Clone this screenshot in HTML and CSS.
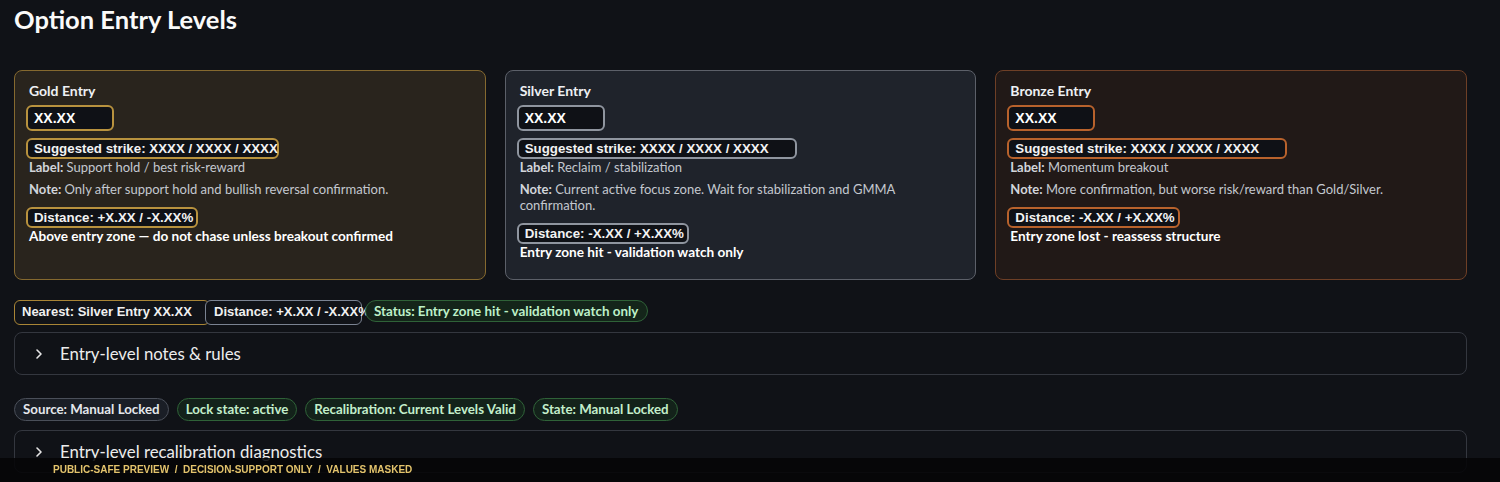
FILE: index.html
```html
<!DOCTYPE html>
<html lang="en">
<head>
<meta charset="utf-8">
<title>Option Entry Levels</title>
<link rel="stylesheet" href="styles.css">
</head>
<body>
<main class="page">
  <h1 class="title">Option Entry Levels</h1>

  <section class="cards">
    <article class="card card--gold">
      <h3 class="card-title">Gold Entry</h3>
      <div class="value-box">XX.XX</div>
      <div class="pill pill--strike pill--tight">Suggested strike: XXXX / XXXX / XXXX</div>
      <p class="meta"><b>Label:</b> Support hold / best risk-reward</p>
      <p class="meta note"><b>Note:</b> Only after support hold and bullish reversal confirmation.</p>
      <div class="pill pill--dist">Distance: +X.XX / -X.XX%</div>
      <p class="verdict">Above entry zone — do not chase unless breakout confirmed</p>
    </article>

    <article class="card card--silver">
      <h3 class="card-title">Silver Entry</h3>
      <div class="value-box">XX.XX</div>
      <div class="pill pill--strike">Suggested strike: XXXX / XXXX / XXXX</div>
      <p class="meta"><b>Label:</b> Reclaim / stabilization</p>
      <p class="meta note"><b>Note:</b> Current active focus zone. Wait for stabilization and GMMA confirmation.</p>
      <div class="pill pill--dist">Distance: -X.XX / +X.XX%</div>
      <p class="verdict">Entry zone hit - validation watch only</p>
    </article>

    <article class="card card--bronze">
      <h3 class="card-title">Bronze Entry</h3>
      <div class="value-box">XX.XX</div>
      <div class="pill pill--strike">Suggested strike: XXXX / XXXX / XXXX</div>
      <p class="meta"><b>Label:</b> Momentum breakout</p>
      <p class="meta note"><b>Note:</b> More confirmation, but worse risk/reward than Gold/Silver.</p>
      <div class="pill pill--dist">Distance: -X.XX / +X.XX%</div>
      <p class="verdict">Entry zone lost - reassess structure</p>
    </article>
  </section>

  <div class="summary">
    <span class="tag tag--nearest">Nearest: Silver Entry XX.XX</span>
    <span class="tag tag--distance">Distance: +X.XX / -X.XX%</span>
    <span class="status">Status: Entry zone hit - validation watch only</span>
  </div>

  <div class="expander">
    <svg class="chev" width="8" height="12" viewBox="0 0 8 12" aria-hidden="true"><path d="M2 2l4 4-4 4" fill="none" stroke="#e6e6e6" stroke-width="1.6" stroke-linecap="round" stroke-linejoin="round"/></svg>
    <span class="expander-label">Entry-level notes &amp; rules</span>
  </div>

  <div class="chips">
    <span class="chip chip--neutral">Source: Manual Locked</span>
    <span class="chip chip--ok">Lock state: active</span>
    <span class="chip chip--ok">Recalibration: Current Levels Valid</span>
    <span class="chip chip--ok">State: Manual Locked</span>
  </div>

  <div class="expander expander--second">
    <svg class="chev" width="8" height="12" viewBox="0 0 8 12" aria-hidden="true"><path d="M2 2l4 4-4 4" fill="none" stroke="#e6e6e6" stroke-width="1.6" stroke-linecap="round" stroke-linejoin="round"/></svg>
    <span class="expander-label">Entry-level recalibration diagnostics</span>
  </div>
</main>

<footer class="preview-bar">PUBLIC-SAFE PREVIEW &nbsp;/&nbsp; DECISION-SUPPORT ONLY &nbsp;/&nbsp; VALUES MASKED</footer>
</body>
</html>
```

FILE: styles.css
```css
html, body {
  margin: 0;
  padding: 0;
  background: #101217;
}

body {
  font-family: Lato, "Noto Sans", sans-serif;
  color: #fafafa;
}

.page {
  padding: 4px 33px 40px 14px;
}

.title {
  margin: 0 0 35px;
  font-size: 25.5px;
  line-height: 31px;
  font-weight: 700;
  color: #fafafa;
}

.cards {
  display: grid;
  grid-template-columns: repeat(3, 1fr);
  gap: 19px;
}

.card {
  border: 1px solid;
  border-radius: 8px;
  padding: 10px 14px 19px;
}

.card--gold {
  background: #29241d;
  border-color: #85692f;
}

.card--silver {
  background: #1f232b;
  border-color: #5c6069;
}

.card--bronze {
  background: #211917;
  border-color: #6e3f26;
}

.card-title {
  margin: 0 0 4px;
  font-size: 14px;
  line-height: 20px;
  font-weight: 700;
  color: #eef0f3;
}

.value-box {
  width: 88px;
  height: 26px;
  box-sizing: border-box;
  margin: 0 0 7px -3px;
  padding-left: 6px;
  border: 2px solid;
  border-radius: 6px;
  background: #0f1116;
  font: 700 14px/22px "Liberation Sans", Arial, sans-serif;
  color: #ffffff;
}

.pill {
  width: fit-content;
  height: 21px;
  box-sizing: border-box;
  margin-left: -3px;
  padding: 0 3px 0 6px;
  border: 2px solid;
  border-radius: 6px;
  background: #0f1116;
  font: 700 13.3px/17px "Liberation Sans", Arial, sans-serif;
  color: #f2f2f2;
  white-space: nowrap;
}

.pill--strike {
  width: 280px;
}

.pill--tight {
  width: 253px;
}

.pill--dist {
  margin-top: 10px;
}

.card--gold .value-box,
.card--gold .pill {
  border-color: #b8923e;
}

.card--silver .value-box,
.card--silver .pill {
  border-color: #8f959f;
}

.card--bronze .value-box,
.card--bronze .pill {
  border-color: #b8622c;
}

.meta {
  margin: 0;
  font-size: 13px;
  line-height: 16px;
  color: #c4c8cf;
}

.meta b {
  font-weight: 700;
  color: #d2d5db;
}

.note {
  margin-top: 6px;
}

.verdict {
  margin: 0;
  font-size: 13.6px;
  line-height: 16px;
  font-weight: 700;
  color: #ffffff;
}

.summary {
  display: flex;
  align-items: flex-start;
  margin-top: 20px;
}

.tag {
  height: 25px;
  box-sizing: border-box;
  border: 1.5px solid;
  border-radius: 6px;
  background: #111318;
  font: 700 13px/22px "Liberation Sans", Arial, sans-serif;
  color: #f0f0f0;
  white-space: nowrap;
}

.tag--nearest {
  width: 196px;
  padding-left: 7px;
  border-color: #a98536;
}

.tag--distance {
  width: 157px;
  margin-left: -5px;
  padding-left: 8px;
  border-color: #7b8392;
}

.status {
  height: 22px;
  box-sizing: border-box;
  margin-left: 3px;
  padding: 0 9px 0 8px;
  border: 1px solid #2f6238;
  border-radius: 11px;
  background: #14251a;
  font-size: 13.4px;
  line-height: 20px;
  font-weight: 700;
  color: #bdf0c8;
  white-space: nowrap;
}

.expander {
  display: flex;
  align-items: center;
  height: 43px;
  box-sizing: border-box;
  margin-top: 7px;
  padding-left: 20px;
  border: 1px solid #34373f;
  border-radius: 8px;
}

.expander--second {
  margin-top: 9px;
}

.chev {
  flex: none;
}

.expander-label {
  margin-left: 17px;
  font-size: 16.8px;
  color: #ececec;
}

.chips {
  display: flex;
  gap: 8px;
  margin-top: 23px;
}

.chip {
  height: 23px;
  box-sizing: border-box;
  padding: 0 8px;
  border: 1px solid;
  border-radius: 12px;
  font-size: 13.3px;
  line-height: 21px;
  font-weight: 700;
  white-space: nowrap;
}

.chip--neutral {
  border-color: #4a4f59;
  background: #1a1e26;
  color: #e4e7ec;
}

.chip--ok {
  border-color: #2f6238;
  background: #13221a;
  color: #c3eecb;
}

.preview-bar {
  position: fixed;
  left: 0;
  right: 0;
  bottom: 0;
  height: 24px;
  padding-left: 53px;
  background: rgba(4, 5, 7, 0.88);
  font: 700 10px/24px "Liberation Sans", Arial, sans-serif;
  color: #e3c36c;
  white-space: nowrap;
}
```
